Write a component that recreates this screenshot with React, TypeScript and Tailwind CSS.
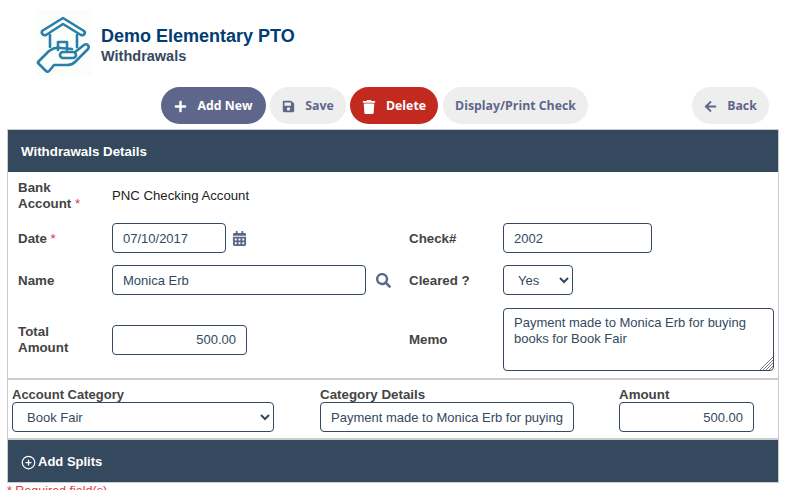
import type { ReactNode } from "react";
import { FaPlus, FaSave, FaTrash, FaArrowLeft, FaCalendarAlt, FaSearch } from "react-icons/fa";
import { FiPlusCircle } from "react-icons/fi";

const inputClass =
    "h-[30px] rounded-[4px] border border-[#34495e] bg-white px-[10px] text-[13px] text-[#34495e] outline-none";

function Logo() {
    return (
        <svg viewBox="36 10 56 66" className="h-[66px] w-[56px]" fill="none" stroke="#2a7fa8" strokeWidth="2.6" strokeLinecap="round" strokeLinejoin="round">
            <rect x="36" y="10" width="56" height="66" fill="#fbfdfa" stroke="none" />
            <path d="M42 31 L63 18 L84 31 C86 33 84 36 81 35 L63 24 L46 35 C43 36 41 33 42 31 Z" />
            <path d="M50 35 V47 M77 35 V47" />
            <path d="M58 50 V42 H67 V50" />
            <path d="M38 62 L49 51 C53 48 57 47 61 48 L72 49" />
            <path d="M75 52 L84 45 C87 43 90 46 88 49 L75 62 C73 64 70 65 67 65 H54 L50 70 C49 72 47 72 46 71 L38 63" />
            <rect x="60" y="52" width="16" height="6" rx="3" />
        </svg>
    );
}

function ActionButton({ icon, label, className }: { icon?: ReactNode; label: string; className: string }) {
    return (
        <button className={`flex h-[37px] items-center justify-center rounded-[19px] pt-[2px] font-['Open_Sans',sans-serif] text-[12.3px] font-bold ${className}`}>
            {icon}
            {label}
        </button>
    );
}

function Label({ children, required, className = "" }: { children: ReactNode; required?: boolean; className?: string }) {
    return (
        <label className={`block text-[13.33px] leading-[16px] font-bold text-[#444] ${className}`}>
            {children}
            {required && <span className="font-normal text-[#dc3545]"> *</span>}
        </label>
    );
}

export default function App() {
    return (
        <div className="h-[490px] overflow-hidden bg-white font-['Liberation_Sans',Arial,sans-serif]">
            {/* Page title */}
            <div className="flex h-[87px] items-start pt-[10px] pl-[36px]">
                <Logo />
                <div className="ml-[9px] pt-[16px]">
                    <h1 className="text-[18px] leading-[20px] font-bold text-[#003d73]">Demo Elementary PTO</h1>
                    <p className="text-[14.5px] leading-[20px] font-bold text-[#34495e]">Withdrawals</p>
                </div>
            </div>

            {/* Toolbar */}
            <div className="flex h-[42px] items-start pl-[161px]">
                <ActionButton
                    label="Add New"
                    className="w-[105px] bg-[#5f668b] text-white"
                    icon={<FaPlus className="mr-[10px] text-[13px]" />}
                />
                <ActionButton
                    label="Save"
                    className="ml-[4px] w-[76px] bg-[#eeeeee] text-[#5f668b]"
                    icon={<FaSave className="mr-[10px] text-[13px]" />}
                />
                <ActionButton
                    label="Delete"
                    className="ml-[4px] w-[88px] bg-[#c22a20] text-white"
                    icon={<FaTrash className="mr-[10px] text-[14px]" />}
                />
                <ActionButton label="Display/Print Check" className="ml-[5px] w-[145px] bg-[#eeeeee] text-[#5f668b]" />
                <ActionButton
                    label="Back"
                    className="ml-[104px] w-[77px] bg-[#eeeeee] text-[#5f668b]"
                    icon={<FaArrowLeft className="mr-[10px] text-[13px]" />}
                />
            </div>

            {/* Details card */}
            <div className="mx-[7px] w-[772px] border border-t-0 border-[#cccccc]">
                <div className="flex h-[43px] items-center border-t border-[#cccccc] bg-[#34495e] pt-[2px] pl-[13px] text-[13.33px] font-bold text-white">
                    Withdrawals Details
                </div>

                <div className="h-[206px] pl-[10px]">
                    <div className="flex items-center pt-[8px]">
                        <Label required className="mr-[14px] w-[80px]">Bank Account</Label>
                        <span className="text-[13.2px] text-[#222]">PNC Checking Account</span>
                    </div>

                    <div className="mt-[11px] flex items-center">
                        <Label required className="w-[94px] pt-[2px]">Date</Label>
                        <input readOnly value="07/10/2017" className={`${inputClass} w-[114px]`} />
                        <FaCalendarAlt className="ml-[6px] text-[15px] text-[#5f668b]" />
                        <Label className="ml-[162px] w-[94px] pt-[2px]">Check#</Label>
                        <input readOnly value="2002" className={`${inputClass} w-[149px]`} />
                    </div>

                    <div className="mt-[12px] flex items-center">
                        <Label className="w-[94px] pt-[2px]">Name</Label>
                        <input readOnly value="Monica Erb" className={`${inputClass} w-[254px]`} />
                        <FaSearch className="ml-[10px] text-[15px] text-[#5f668b]" />
                        <Label className="ml-[18px] w-[94px] pt-[2px]">Cleared ?</Label>
                        <select className={`${inputClass} w-[70px]`} defaultValue="Yes">
                            <option>Yes</option>
                            <option>No</option>
                        </select>
                    </div>

                    <div className="mt-[13px] flex items-center">
                        <Label className="mr-[34px] w-[60px]">Total Amount</Label>
                        <input readOnly value="500.00" className={`${inputClass} w-[135px] text-right`} />
                        <Label className="ml-[162px] w-[94px]">Memo</Label>
                        <div className="relative flex">
                            <textarea
                                readOnly
                                value="Payment made to Monica Erb for buying books for Book Fair"
                                className="h-[63px] w-[271px] resize-none rounded-[4px] border border-[#34495e] bg-white px-[10px] py-[6px] text-[13px] leading-[16px] text-[#34495e] outline-none"
                            />
                            {/* resize grip */}
                            <svg viewBox="0 0 14 14" className="absolute right-[1px] bottom-[1px] h-[14px] w-[14px]" stroke="#777" strokeWidth="1">
                                <path d="M1 14 L14 1 M4 14 L14 4 M7 14 L14 7 M10 14 L14 10" />
                            </svg>
                        </div>
                    </div>
                </div>

                {/* Account split row */}
                <div className="flex h-[62px] border-y-2 border-[#cccccc] pt-[6px] pl-[4px]">
                    <div className="w-[308px]">
                        <Label className="h-[16px] pt-[1px] text-[13px]">Account Category</Label>
                        <select className={`${inputClass} w-[262px]`} defaultValue="Book Fair">
                            <option>Book Fair</option>
                        </select>
                    </div>
                    <div className="w-[299px]">
                        <Label className="h-[16px] pt-[1px]">Category Details</Label>
                        <input readOnly value="Payment made to Monica Erb for puying" className={`${inputClass} w-[254px]`} />
                    </div>
                    <div>
                        <Label className="h-[16px] pt-[1px]">Amount</Label>
                        <input readOnly value="500.00" className={`${inputClass} w-[135px] text-right`} />
                    </div>
                </div>

                <div className="flex h-[42px] items-center bg-[#34495e] pt-[2px] pl-[13px] text-[13px] font-bold text-white">
                    <FiPlusCircle className="mr-[2px] text-[15px]" />
                    Add Splits
                </div>
            </div>
            <p className="mx-[7px] mt-[1px] text-[12.5px] leading-[15px] text-[#dc3545]">* Required field(s)</p>
        </div>
    );
}
